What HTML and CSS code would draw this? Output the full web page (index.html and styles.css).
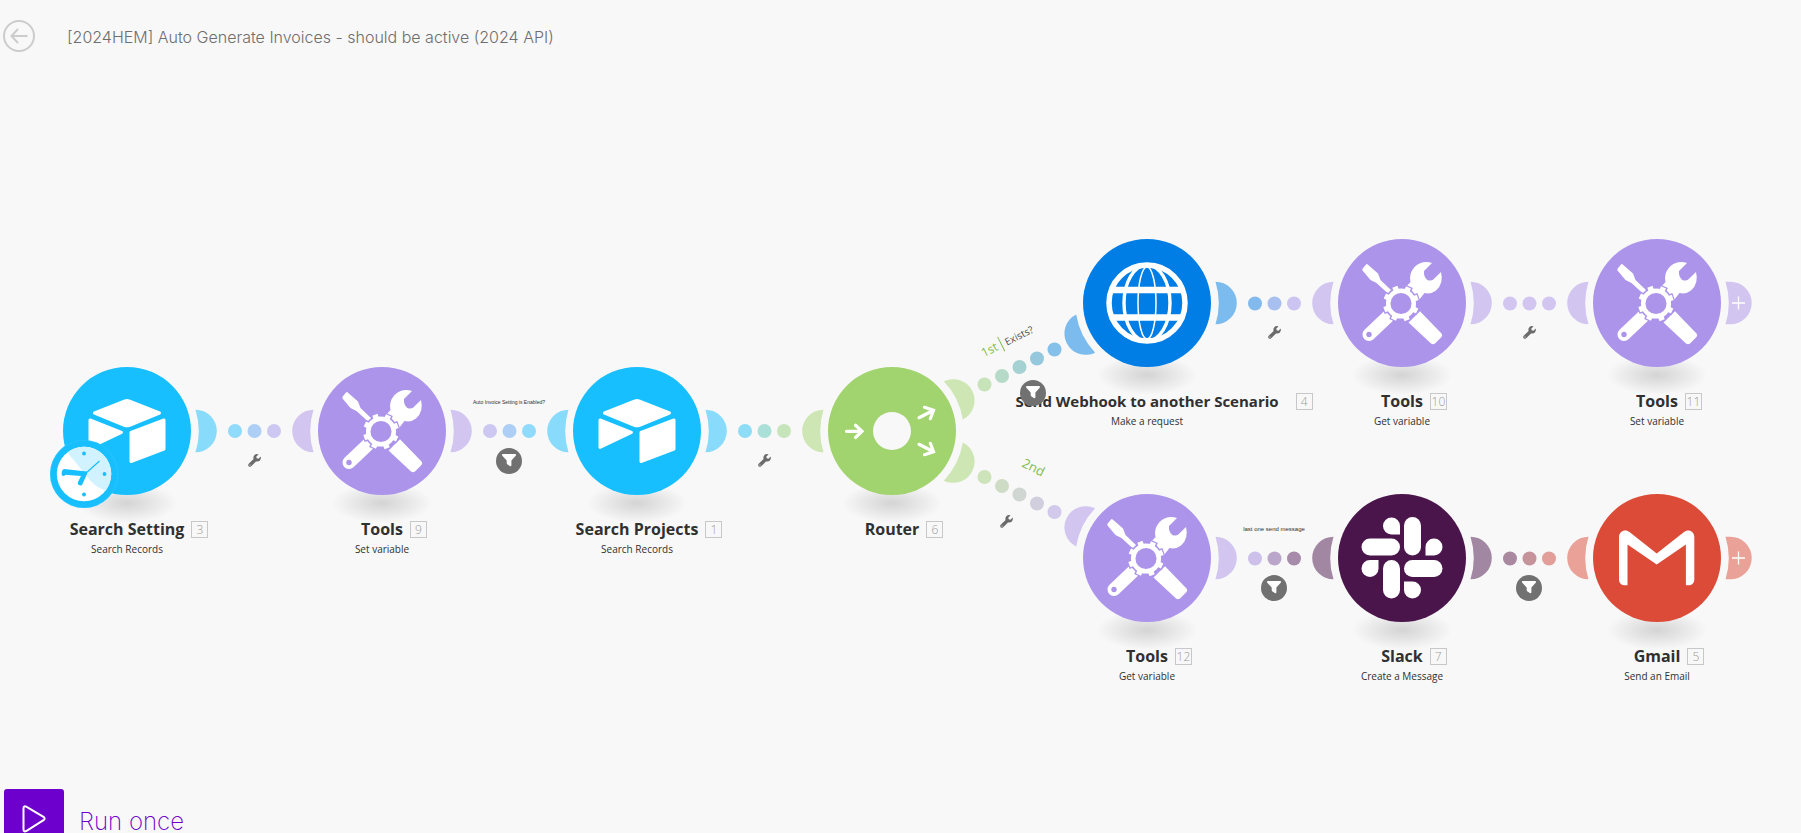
FILE: index.html
```html
<!DOCTYPE html>
<html lang="en">
<head>
<meta charset="utf-8">
<title>[2024HEM] Auto Generate Invoices</title>
<link rel="stylesheet" href="styles.css">
</head>
<body>
<svg class="defs" aria-hidden="true">
  <symbol id="i-airtable" viewBox="-64 -64 128 128" overflow="visible">
    <g fill="#fff" stroke="#fff" stroke-width="3" stroke-linejoin="round">
      <path d="M-32.5-18 L-2-30.2 Q0-31 2-30.2 L32.5-18 L2-5.5 Q0-4.8-2-5.5Z"/>
      <path d="M-37-11 L-5.5 1.3 L-37 16.3Z"/>
      <path d="M4 1.5 L37-11 V18 L4 30.5Z"/>
    </g>
  </symbol>
  <symbol id="i-tools" viewBox="-64 -64 128 128">
    <g fill="#fff">
      <path d="M-35.5-39 Q-34.5-39-34-38.2 L-24-29.5 L-21.5-23 L-10-12 L-13-8.5 L-25.5-20 L-31.5-23 L-39.5-32.5 Q-40-33.500-39.300-34.500Z"/>
      <path d="M30-40 L22-32 Q21.500-26 25.300-23 Q29-21.800 31-23.300 L39-31 Q42-19.500 34-12.500 Q29-8.500 22.500-10 L17-3 L4-16 L8.500-21 Q6.500-29 12.500-36 Q20-43 30-40Z"/>
      <path d="M6.500 19.500 L18 8.300 L39.500 30.500 Q41 32 39.500 34 L33 40.500 Q31 42 29 40.500Z"/>
    </g>
    <path d="M-33 31.500 L-14 13.500" stroke="#fff" stroke-width="13" stroke-linecap="round"/>
    <circle cx="-33" cy="31.500" r="2.700" fill="#ac94eb"/>
    <g transform="translate(-1 .5)">
      <circle r="14.500" fill="none" stroke="#ac94eb" stroke-width="4.500"/>
      <g stroke="#ac94eb" stroke-width="8.500">
        <path transform="rotate(-20)" d="M-19 0H-12M12 0H19M0-19V-12M0 12V19M-13.400-13.400L-8.500-8.500M8.500 8.500L13.400 13.400M13.400-13.400L8.500-8.500M-8.500 8.500L-13.400 13.400"/>
      </g>
      <g stroke="#fff" stroke-width="5.500">
        <path transform="rotate(-20)" d="M-17.800 0H-12M12 0H17.800M0-17.800V-12M0 12V17.800M-12.600-12.600L-8.500-8.500M8.500 8.500L12.600 12.600M12.600-12.600L8.500-8.500M-8.500 8.500L-12.600 12.600"/>
      </g>
      <circle r="12.800" fill="#ac94eb" stroke="#fff" stroke-width="4.500"/>
    </g>
  </symbol>
  <symbol id="i-router" viewBox="-64 -64 128 128">
    <circle r="19" fill="#f8f8f8"/>
    <g fill="none" stroke="#fff" stroke-width="3.200" stroke-linecap="round">
      <path d="M-45.500.3H-30M-36.500-5.700L-30 .3L-36.500 6.500"/>
      <path d="M27-13.300L41.500-20.700M32.500-23.700L41.500-20.700L38.300-12.300"/>
      <path d="M27 13.300L41.500 20.700M32.500 23.700L41.500 20.700L38.300 12.300"/>
    </g>
  </symbol>
  <symbol id="i-globe" viewBox="-64 -64 128 128">
    <g fill="none" stroke="#fff">
      <circle r="38" stroke-width="5.500"/>
      <ellipse rx="23" ry="38" stroke-width="3.400"/>
      <ellipse rx="9" ry="36" stroke-width="1.500"/>
      <path d="M-36-13H36M-36 14.500H36" stroke-width="6.500"/>
    </g>
  </symbol>
  <symbol id="i-slack" viewBox="-64 -64 128 128">
    <g fill="#fff">
      <rect x="2" y="-41" width="17" height="38.500" rx="8.500"/>
      <rect x="-40.500" y="-19.500" width="38.500" height="17" rx="8.500"/>
      <rect x="-19" y="2" width="17" height="38.500" rx="8.500"/>
      <rect x="2" y="2" width="38.500" height="17" rx="8.500"/>
      <path d="M-2-23.500H-10.500A8.500 8.500 0 1 1-2-32Z"/>
      <path d="M23.500-2.500V-11A8.500 8.500 0 1 1 32-2.500Z"/>
      <path d="M2 23.500H10.500A8.500 8.500 0 1 1 2 32Z"/>
      <path d="M-23.500 2V10.500A8.500 8.500 0 1 1-32 2Z"/>
    </g>
  </symbol>
  <symbol id="i-gmail" viewBox="-64 -64 128 128">
    <path fill="#fff" d="M-29.500 27.300h-3a5.500 5.500 0 0 1-5.500-5.500V-21C-38-27-31.500-29.500-27.500-26L-.3-4.500L27-26C31-29.500 37.300-27 37.300-21V21.800a5.500 5.500 0 0 1-5.500 5.500H28.900V-13.500L-.3 6.500L-29.500-13.500Z"/>
  </symbol>
  <symbol id="i-wrench" viewBox="0 0 13 13">
    <path fill="#6b6b6b" d="M10.600.4 Q8-.5 6.300 1.300 Q4.900 3 5.600 5 L.7 9.800 Q-.4 11 .6 12.300 Q1.800 13.400 3.200 12.300 L8 7.400 Q10.300 8 11.900 6.400 Q13.300 4.800 12.700 2.600 L10.500 4.700 L8.700 4.200 L8.300 2.500Z"/>
    <circle cx="2" cy="11" r=".6" fill="#f8f8f8"/>
  </symbol>
  <symbol id="i-funnel" viewBox="-13 -13 26 26">
    <path fill="#fff" d="M-6.200-7H6.200Q7.600-6.600 6.700-5.200L2.400-.4V4.300Q2.200 5.700.8 5.100L-1.800 3.200Q-2.300 2.800-2.300 2V-.4L-6.700-5.200Q-7.600-6.600-6.200-7Z"/>
  </symbol>
  <symbol id="moon" viewBox="-100 -100 200 200">
    <path d="M68.500-21.300A21.300 21.300 0 0 1 68.500 21.300A71.700 71.700 0 0 0 68.500-21.300Z"/>
  </symbol>
</svg>

<main class="editor">
  <header class="topbar">
    <button class="back" aria-label="Back">
      <svg viewBox="0 2 32 32" width="32" height="32"><g fill="none" stroke="#ccc" stroke-width="2"><circle cx="16" cy="18" r="15"/><path d="M24.500 18H8.500M15 11L8.500 18L15 25"/></g></svg>
    </button>
    <h1 class="scenario">[2024HEM] Auto Generate Invoices - should be active (2024 API)</h1>
  </header>

  <section class="canvas" aria-label="Scenario">
    <svg class="links" viewBox="0 72 1801 717" width="1801" height="717" aria-hidden="true">
      <g class="moons">
        <g fill="#88dbfb">
          <use href="#moon" x="27" y="331" width="200" height="200"/>
          <use href="#moon" x="537" y="331" width="200" height="200"/>
          <use href="#moon" x="-100" y="-100" width="200" height="200" transform="translate(637 431) rotate(180)"/>
        </g>
        <g fill="#d2c6f1">
          <use href="#moon" x="-100" y="-100" width="200" height="200" transform="translate(382 431) rotate(180)"/>
          <use href="#moon" x="282" y="331" width="200" height="200"/>
          <use href="#moon" x="-100" y="-100" width="200" height="200" transform="translate(1402 303) rotate(180)"/>
          <use href="#moon" x="1302" y="203" width="200" height="200"/>
          <use href="#moon" x="-100" y="-100" width="200" height="200" transform="translate(1657 303) rotate(180)"/>
          <use href="#moon" x="-100" y="-100" width="200" height="200" transform="translate(1147 558) rotate(206.500)"/>
          <use href="#moon" x="1047" y="458" width="200" height="200"/>
        </g>
        <g fill="#cde6b3">
          <use href="#moon" x="-100" y="-100" width="200" height="200" transform="translate(892 431) rotate(180)"/>
          <use href="#moon" x="-100" y="-100" width="200" height="200" transform="translate(892 431) rotate(-26.500)"/>
          <use href="#moon" x="-100" y="-100" width="200" height="200" transform="translate(892 431) rotate(26.500)"/>
        </g>
        <g fill="#7cbbee">
          <use href="#moon" x="-100" y="-100" width="200" height="200" transform="translate(1147 303) rotate(153.500)"/>
          <use href="#moon" x="1047" y="203" width="200" height="200"/>
        </g>
        <g fill="#a187a2">
          <use href="#moon" x="-100" y="-100" width="200" height="200" transform="translate(1402 558) rotate(180)"/>
          <use href="#moon" x="1302" y="458" width="200" height="200"/>
        </g>
        <g fill="#eaa198">
          <use href="#moon" x="-100" y="-100" width="200" height="200" transform="translate(1657 558) rotate(180)"/>
        </g>
      </g>
      <g class="dots">
        <circle cx="235" cy="431" r="7" fill="#90dafb"/><circle cx="254.500" cy="431" r="7" fill="#adcff6"/><circle cx="274" cy="431" r="7" fill="#ccc8f2"/>
        <circle cx="490" cy="431" r="7" fill="#ccc8f2"/><circle cx="509.500" cy="431" r="7" fill="#adcff6"/><circle cx="529" cy="431" r="7" fill="#90dafb"/>
        <circle cx="745" cy="431" r="7" fill="#8edcf5"/><circle cx="764.500" cy="431" r="7" fill="#aae0d8"/><circle cx="784" cy="431" r="7" fill="#c7e5ba"/>
        <circle cx="984.500" cy="384.500" r="7" fill="#c6e3ba"/><circle cx="1002" cy="376" r="7" fill="#b5dac8"/><circle cx="1019.500" cy="367" r="7" fill="#a4d1d1"/><circle cx="1037" cy="358.500" r="7" fill="#95c8dd"/><circle cx="1054.500" cy="349.500" r="7" fill="#84c0ea"/>
        <circle cx="984.500" cy="477" r="7" fill="#cde3b9"/><circle cx="1002" cy="486" r="7" fill="#cfdcc5"/><circle cx="1019.500" cy="494.500" r="7" fill="#d0d6d2"/><circle cx="1037" cy="503.500" r="7" fill="#d1cfde"/><circle cx="1054.500" cy="512" r="7" fill="#d2c9eb"/>
        <circle cx="1255" cy="303.500" r="7" fill="#83baee"/><circle cx="1274.500" cy="303.500" r="7" fill="#a7c0f0"/><circle cx="1294" cy="303.500" r="7" fill="#cdc5f1"/>
        <circle cx="1510" cy="303.500" r="7" fill="#d2c6f1"/><circle cx="1529.500" cy="303.500" r="7" fill="#d2c6f1"/><circle cx="1549" cy="303.500" r="7" fill="#d2c6f1"/>
        <circle cx="1255" cy="558.500" r="7" fill="#cdc0ea"/><circle cx="1274.500" cy="558.500" r="7" fill="#baa6ca"/><circle cx="1294" cy="558.500" r="7" fill="#a68caa"/>
        <circle cx="1510" cy="558.500" r="7" fill="#a9899f"/><circle cx="1529.500" cy="558.500" r="7" fill="#c6939b"/><circle cx="1549" cy="558.500" r="7" fill="#e29e99"/>
      </g>
    </svg>

    <article class="module airtable c1 mid">
      <button class="disc" aria-label="Search Setting"><svg class="icon"><use href="#i-airtable"/></svg></button>
      <svg class="clock" viewBox="-34 -34 68 68" width="68" height="68" aria-hidden="true">
        <circle r="34" fill="#18bfff"/>
        <circle r="33.600" fill="none" stroke="#45ccff" stroke-width=".5" stroke-dasharray="2 1"/>
        <circle r="27.200" fill="#fff"/>
        <path d="M1 0L-16.500-21.600A27.200 27.200 0 0 1 21.500 16.700Q10 13 1 0Z" fill="#d1f2ff"/>
        <g fill="#18bfff"><circle cy="-20.500" r="1.900"/><circle cx="20.500" r="1.900"/><circle cy="20.500" r="1.900"/><circle cx="-20.500" r="1.900"/>
        <path d="M3-2.500L-20-5Q-23-4-22 .8L-19.500 1.300V.8L-3 2L-6 8Q-7 11-3.500 11.500Q-2 11.500-1.500 10L3 0Z"/></g>
        <path d="M1 0L15.500-13" stroke="#18bfff" stroke-width="1.200"/>
      </svg>
      <div class="caption"><h2>Search Setting<span class="num">3</span></h2><p>Search Records</p></div>
    </article>

    <article class="module tools c2 mid">
      <button class="disc" aria-label="Tools"><svg class="icon"><use href="#i-tools"/></svg></button>
      <div class="caption"><h2>Tools<span class="num">9</span></h2><p>Set variable</p></div>
    </article>

    <article class="module airtable c3 mid">
      <button class="disc" aria-label="Search Projects"><svg class="icon"><use href="#i-airtable"/></svg></button>
      <div class="caption"><h2>Search Projects<span class="num">1</span></h2><p>Search Records</p></div>
    </article>

    <article class="module router c4 mid">
      <button class="disc" aria-label="Router"><svg class="icon"><use href="#i-router"/></svg></button>
      <div class="caption"><h2>Router<span class="num">6</span></h2></div>
    </article>

    <article class="module http c5 top">
      <button class="disc" aria-label="Send Webhook"><svg class="icon"><use href="#i-globe"/></svg></button>
      <div class="caption long"><h2>Send Webhook to another Scenario<span class="num">4</span></h2><p>Make a request</p></div>
    </article>

    <article class="module tools c6 top">
      <button class="disc" aria-label="Tools"><svg class="icon"><use href="#i-tools"/></svg></button>
      <div class="caption"><h2>Tools<span class="num">10</span></h2><p>Get variable</p></div>
    </article>

    <article class="module tools c7 top">
      <button class="disc" aria-label="Tools"><svg class="icon"><use href="#i-tools"/></svg></button>
      <button class="add" aria-label="Add module"><svg viewBox="68 -22 27 44" width="27" height="44"><path fill="#d2c6f1" d="M68.500-21.300H73.400A21.300 21.300 0 0 1 73.400 21.300H68.500A71.700 71.700 0 0 0 68.500-21.300Z"/><path d="M75 0H88M81.500-6.500V6.500" stroke="#fff" stroke-width="1.300"/></svg></button>
      <div class="caption"><h2>Tools<span class="num">11</span></h2><p>Set variable</p></div>
    </article>

    <article class="module tools c5 low">
      <button class="disc" aria-label="Tools"><svg class="icon"><use href="#i-tools"/></svg></button>
      <div class="caption"><h2>Tools<span class="num">12</span></h2><p>Get variable</p></div>
    </article>

    <article class="module slack c6 low">
      <button class="disc" aria-label="Slack"><svg class="icon"><use href="#i-slack"/></svg></button>
      <div class="caption"><h2>Slack<span class="num">7</span></h2><p>Create a Message</p></div>
    </article>

    <article class="module gmail c7 low">
      <button class="disc" aria-label="Gmail"><svg class="icon"><use href="#i-gmail"/></svg></button>
      <button class="add" aria-label="Add module"><svg viewBox="68 -22 27 44" width="27" height="44"><path fill="#eaa198" d="M68.500-21.300H73.400A21.300 21.300 0 0 1 73.400 21.300H68.500A71.700 71.700 0 0 0 68.500-21.300Z"/><path d="M75 0H88M81.500-6.500V6.500" stroke="#fff" stroke-width="1.300"/></svg></button>
      <div class="caption"><h2>Gmail<span class="num">5</span></h2><p>Send an Email</p></div>
    </article>

    <button class="setup l1 mid" aria-label="Set up filter"><svg><use href="#i-wrench"/></svg></button>
    <button class="filter l2 mid" aria-label="Filter"><svg><use href="#i-funnel"/></svg></button>
    <button class="setup l3 mid" aria-label="Set up filter"><svg><use href="#i-wrench"/></svg></button>
    <button class="filter branch-up" aria-label="Filter"><svg><use href="#i-funnel"/></svg></button>
    <button class="setup branch-down" aria-label="Set up filter"><svg><use href="#i-wrench"/></svg></button>
    <button class="setup l5 top" aria-label="Set up filter"><svg><use href="#i-wrench"/></svg></button>
    <button class="setup l6 top" aria-label="Set up filter"><svg><use href="#i-wrench"/></svg></button>
    <button class="filter l5 low" aria-label="Filter"><svg><use href="#i-funnel"/></svg></button>
    <button class="filter l6 low" aria-label="Filter"><svg><use href="#i-funnel"/></svg></button>

    <span class="link-label tiny l2 mid">Auto Invoice Setting is Enabled?</span>
    <span class="link-label l5 low">last one send message</span>
    <span class="route route-up"><b>1st</b><i>Exists?</i></span>
    <span class="route route-down">2nd</span>
  </section>

  <footer class="runbar">
    <button class="run">
      <span class="run-box"><svg viewBox="0 0 24 28" width="24" height="28"><path d="M1.500 3.500Q1.500.5 4.200 1.700L21.500 11.800Q23.800 13.500 21.500 15.200L4.200 26Q1.500 27.300 1.500 24.300Z" fill="none" stroke="#fff" stroke-width="2"/></svg></span>
      <span class="run-text">Run once</span>
    </button>
  </footer>
</main>
</body>
</html>
```

FILE: styles.css
```css
* { box-sizing: border-box; }

html { overflow: hidden; }

body {
  margin: 0;
  background: #f8f8f8;
  color: #303030;
  font-family: "Open Sans", "Noto Sans", sans-serif;
}

button {
  padding: 0;
  border: 0;
  background: none;
  font: inherit;
  cursor: pointer;
}

svg { display: block; }

.defs {
  position: absolute;
  width: 0;
  height: 0;
}

.editor {
  display: flex;
  flex-direction: column;
  min-height: 100vh;
}

/* Top bar */
.topbar {
  display: flex;
  align-items: center;
  gap: 32px;
  height: 72px;
  padding: 0 3px;
}

.scenario {
  margin: 0;
  padding-top: 2px;
  color: #6e6e6e;
  font: 300 16px/20px Inter, sans-serif;
}

/* Canvas: modules sit on a free grid of columns and rows */
.canvas {
  position: relative;
  min-height: 717px;
}

.links {
  position: absolute;
  inset: 0 auto auto 0;
}

.top { --y: 231px; }
.mid { --y: 359px; }
.low { --y: 486px; }

.c1 { --x: 127px; }
.c2 { --x: 382px; }
.c3 { --x: 637px; }
.c4 { --x: 892px; }
.c5 { --x: 1147px; }
.c6 { --x: 1402px; }
.c7 { --x: 1657px; }

.l1 { --x: 254px; }
.l2 { --x: 509px; }
.l3 { --x: 764px; }
.l5 { --x: 1274px; }
.l6 { --x: 1529px; }

.branch-up { --x: 1033px; --y: 291px; }
.branch-down { --x: 1006px; --y: 420px; }

.airtable { --color: #18bfff; }
.tools { --color: #ac94eb; }
.router { --color: #a1d36e; }
.http { --color: #007ee5; }
.slack { --color: #4a154b; }
.gmail { --color: #dc4b38; }

.module {
  position: absolute;
  left: calc(var(--x) - 64px);
  top: calc(var(--y) - 64px);
  width: 128px;
}

.module::before {
  content: "";
  position: absolute;
  left: 14px;
  top: 116px;
  width: 100px;
  height: 40px;
  background: radial-gradient(closest-side, #d4d4d4, #e2e2e2 40%, #f8f8f8);
}

.disc {
  position: relative;
  display: block;
  width: 128px;
  height: 128px;
  border-radius: 50%;
  background: var(--color);
}

.icon {
  width: 128px;
  height: 128px;
}

.clock {
  position: absolute;
  left: -13px;
  top: 73px;
}

.add {
  position: absolute;
  left: 132px;
  top: 42px;
}

.caption {
  position: relative;
  display: flex;
  flex-direction: column;
  align-items: center;
  padding-top: 23px;
  white-space: nowrap;
}

.caption h2 {
  position: relative;
  margin: 0;
  font-size: 16px;
  line-height: 22px;
  font-weight: 700;
}

.caption p {
  margin: 2px 0 0;
  font-size: 10px;
  line-height: 14px;
}

.caption.long h2 { font-size: 15px; }

.num {
  position: absolute;
  left: calc(100% + 7px);
  top: 3px;
  width: 17px;
  height: 17px;
  border: 1px solid #c8c8c8;
  color: #9a9a9a;
  font-size: 12px;
  line-height: 15px;
  font-weight: 300;
  text-align: center;
}

.long .num { left: calc(100% + 17px); }

/* Controls under the links */
.setup {
  position: absolute;
  left: calc(var(--x) - 6px);
  top: calc(var(--y) + 23px);
}

.setup svg {
  width: 13px;
  height: 13px;
}

.filter {
  position: absolute;
  left: calc(var(--x) - 13px);
  top: calc(var(--y) + 17px);
  border-radius: 50%;
  background: #717171;
}

.filter svg {
  width: 26px;
  height: 26px;
}

.link-label {
  position: absolute;
  left: var(--x);
  top: calc(var(--y) - 34px);
  transform: translateX(-50%);
  font-family: "Liberation Sans", sans-serif;
  font-size: 6px;
  line-height: 10px;
  white-space: nowrap;
}

.link-label.tiny { font-size: 5px; }

.route {
  position: absolute;
  display: flex;
  align-items: center;
  color: #82bb4b;
  font-size: 13px;
  line-height: 16px;
}

.route-up {
  left: 979px;
  top: 261px;
  transform: rotate(-26.5deg);
}

.route-up b {
  padding-right: 4px;
  border-right: 1px solid #82bb4b;
  font-size: 12px;
  font-weight: 500;
}

.route-up i {
  padding-left: 4px;
  color: #505050;
  font-size: 10px;
  font-style: normal;
}

.route-down {
  left: 1022px;
  top: 387px;
  transform: rotate(26.5deg);
}

/* Run bar */
.runbar {
  padding-left: 4px;
}

.run {
  display: flex;
  align-items: center;
  gap: 15px;
}

.run-box {
  display: grid;
  place-items: center;
  width: 60px;
  height: 60px;
  border-radius: 3px;
  background: #6d00cc;
}

.run-text {
  padding-top: 6px;
  color: #6d00cc;
  font: 200 24px/30px Inter, sans-serif;
}
```
